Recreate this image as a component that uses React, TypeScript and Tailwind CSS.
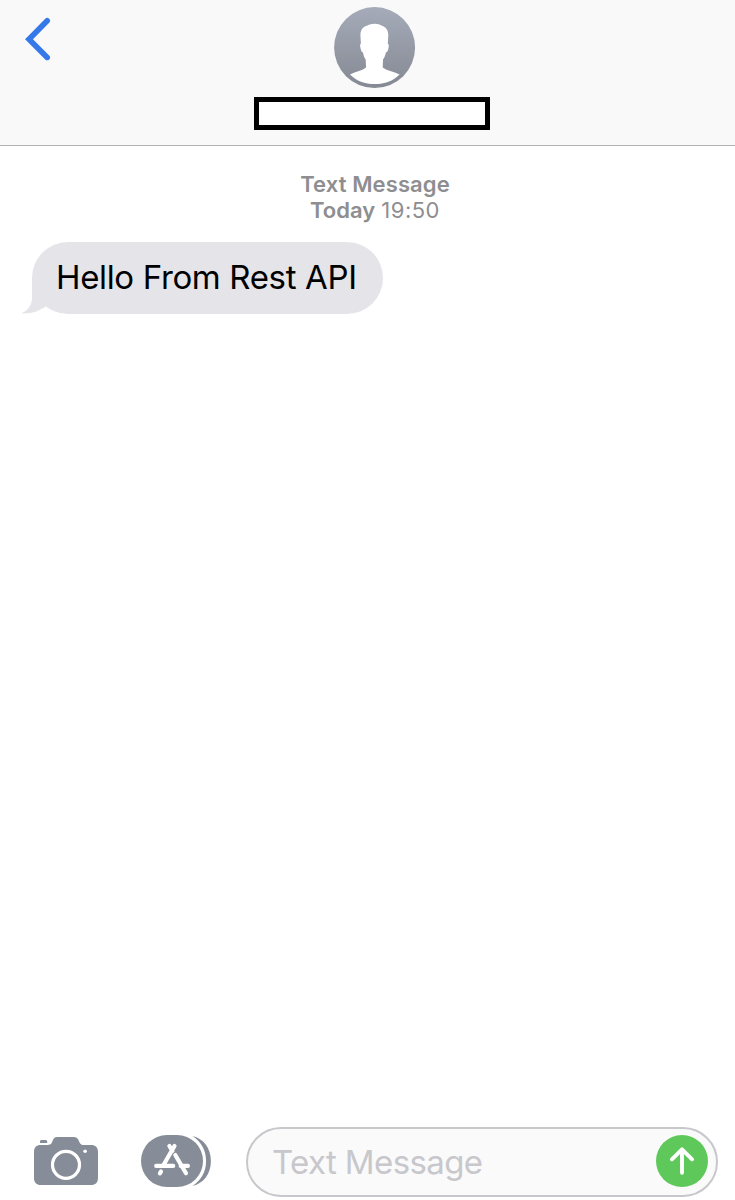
import React from "react";

function BackChevron() {
  return (
    <svg className="mt-4 ml-5 h-12 w-9" viewBox="20 16 36 48" fill="none" aria-hidden="true">
      <path d="M47.200 20.800 29 39.200l18.200 18.200" stroke="#3478ea" strokeWidth="5.600" strokeLinecap="round" strokeLinejoin="miter" />
    </svg>
  );
}

function Avatar() {
  return (
    <svg className="h-[82px] w-[82px]" viewBox="334 7 82 82" aria-hidden="true">
      <defs>
        <linearGradient id="avatar" x1="0" y1="0" x2="0" y2="1">
          <stop offset="0" stopColor="#a5abb9" />
          <stop offset="1" stopColor="#858993" />
        </linearGradient>
      </defs>
      <circle cx="374.600" cy="47.600" r="40.500" fill="url(#avatar)" />
      <path
        d="M374.800 23.700C371 23.700 368 25 365.300 26.300C361.800 28 360.400 31 360.400 35L360.900 43.600C359.800 44.200 360 46 360.600 48.500C361 50.800 361.700 52.200 363 52.500C363.400 55 364.200 57.500 365.700 59.500L366 67.500C362.500 70.500 356 71.500 350 74.400C356.500 81 364.800 84 374.800 84C384.800 84 393 81 399.600 74.400C393.500 71.500 386.500 70.500 382.700 67.500L383 59.500C384.600 57.500 385.400 55 385.900 52.500C387.200 52.200 388 50.800 388.400 48.500C388.900 46 389 44.200 387.800 43.600L388.300 35C388.300 31 386.700 28 383.300 26.300C380.700 25 378.500 23.700 374.800 23.700Z"
        fill="#fff"
      />
    </svg>
  );
}

function CameraIcon() {
  return (
    <svg className="h-[52px] w-[66px]" viewBox="33 1136 66 52" aria-hidden="true">
      <path
        d="M40.500 1145H48c3.300 0 3.600-1.500 4.500-3.900 1-2.700 2-4.100 5-4.100h16c3 0 4.300 1.400 5.400 4.100.9 2.400 1.600 3.900 4.600 3.900h7.500c4.500 0 7 2.300 7 7v26c0 4.700-2.500 7-7 7H41c-4.500 0-7-2.300-7-7v-26c0-4.700 2.500-7 6.500-7Z"
        fill="#868d98"
      />
      <path d="M40 1143v-1.300c0-1 .7-1.700 1.700-1.700h3.800c1 0 1.700.7 1.700 1.700v1.300Z" fill="#868d98" />
      <circle cx="66" cy="1164.800" r="13.500" fill="none" stroke="#fff" strokeWidth="3.200" />
      <circle cx="85.100" cy="1151.300" r="1.800" fill="#fff" />
    </svg>
  );
}

function AppStoreIcon() {
  return (
    <svg className="h-[54px] w-[72px]" viewBox="140 1134 72 54" fill="none" aria-hidden="true">
      <rect x="141" y="1135" width="62" height="52" rx="26" fill="#868d98" />
      <path d="M192.500 1136c10.900 2.500 18.400 12 18.400 25s-7.500 22.500-18.400 25c8.500-5.300 13.600-14.300 13.600-25s-5.100-19.700-13.600-25Z" fill="#868d98" />
      <path
        d="m174.500 1146-10.700 18.500M169.400 1146l3 5M175.300 1155l10.700 18.300M156.200 1165.900h17M180.700 1165.900h7.200M161 1171.500l-1.100 1.900"
        stroke="#fff"
        strokeWidth="4.200"
        strokeLinecap="round"
      />
    </svg>
  );
}

function SendButton() {
  return (
    <button type="button" aria-label="Send" className="mb-0.5 flex h-[52px] w-[52px] shrink-0 items-center justify-center rounded-full bg-[#5fc85b]">
      <svg className="h-[52px] w-[52px]" viewBox="656 1135 52 52" fill="none" aria-hidden="true">
        <path d="M682 1172.700v-23M671.900 1159.300l10.100-10 10.100 10" stroke="#fff" strokeWidth="3.900" strokeLinecap="round" strokeLinejoin="round" />
      </svg>
    </button>
  );
}

export default function App() {
  return (
    <div className="flex h-[1200px] w-[735px] flex-col overflow-hidden bg-white font-['Inter',sans-serif]">
      <header className="grid h-[146px] shrink-0 grid-cols-[254px_236px_1fr] border-b border-[#b2b2b4] bg-[#f9f9f9]">
        <BackChevron />
        <div className="flex flex-col items-center pt-[7px]">
          <div className="ml-[6px]">
            <Avatar />
          </div>
          <div className="mt-2 h-[33px] w-[236px] border-[5px] border-black bg-white" />
        </div>
      </header>

      <main className="flex flex-1 flex-col items-start">
        <div className="mt-[25px] ml-[15px] w-[720px] text-center text-[22px] leading-[26px] text-[#8e8e91]">
          <p className="font-semibold tracking-[0.1px]">Text Message</p>
          <p>
            <span className="font-semibold">Today</span> <span className="tracking-[0.5px]">19:50</span>
          </p>
        </div>
        <div className="relative mt-[19px] ml-8 flex h-[72px] w-[351px] items-center rounded-[36px] bg-[#e5e4e9] pl-6">
          <svg className="absolute bottom-0 -left-[11px] h-9 w-12" viewBox="21 278 48 36" aria-hidden="true">
            <path d="M32 278v20c0 7-4 12.500-10.500 15.300 8.500.8 17-2 23.500-6.300L60 296V278Z" fill="#e5e4e9" />
          </svg>
          <span className="relative text-[33px] tracking-[-0.35px] whitespace-nowrap text-black">Hello From Rest API</span>
        </div>
      </main>

      <footer className="flex h-[73px] shrink-0 items-start">
        <div className="mt-[9px] ml-[33px] flex">
          <CameraIcon />
        </div>
        <div className="mt-[7px] ml-[41px] flex">
          <AppStoreIcon />
        </div>
        <div className="ml-[34px] flex h-[70px] w-[472px] items-center justify-between rounded-full border-2 border-[#c8c7cc] bg-[#fafafa] pr-2 pl-6">
          <span className="pt-0.5 text-[33px] tracking-[-0.62px] whitespace-nowrap text-[#c7c7cc]">Text Message</span>
          <SendButton />
        </div>
      </footer>
    </div>
  );
}
